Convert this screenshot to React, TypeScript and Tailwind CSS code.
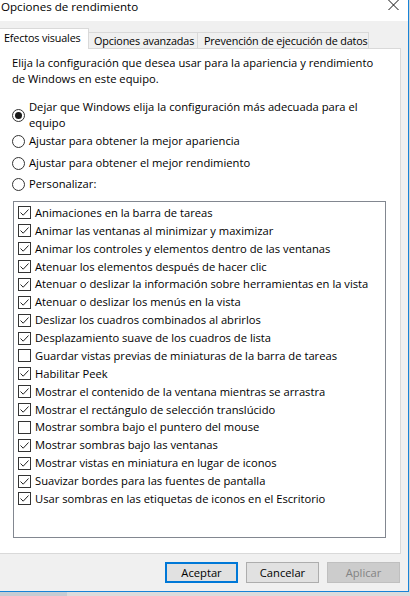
import { useState } from 'react';

const effects = [
  { label: 'Animaciones en la barra de tareas', on: true },
  { label: 'Animar las ventanas al minimizar y maximizar', on: true },
  { label: 'Animar los controles y elementos dentro de las ventanas', on: true },
  { label: 'Atenuar los elementos después de hacer clic', on: true },
  { label: 'Atenuar o deslizar la información sobre herramientas en la vista', on: true },
  { label: 'Atenuar o deslizar los menús en la vista', on: true },
  { label: 'Deslizar los cuadros combinados al abrirlos', on: true },
  { label: 'Desplazamiento suave de los cuadros de lista', on: true },
  { label: 'Guardar vistas previas de miniaturas de la barra de tareas', on: false },
  { label: 'Habilitar Peek', on: true },
  { label: 'Mostrar el contenido de la ventana mientras se arrastra', on: true },
  { label: 'Mostrar el rectángulo de selección translúcido', on: true },
  { label: 'Mostrar sombra bajo el puntero del mouse', on: false },
  { label: 'Mostrar sombras bajo las ventanas', on: true },
  { label: 'Mostrar vistas en miniatura en lugar de iconos', on: true },
  { label: 'Suavizar bordes para las fuentes de pantalla', on: true },
  { label: 'Usar sombras en las etiquetas de iconos en el Escritorio', on: true },
];

function Radio({ checked }: { checked: boolean }) {
  return (
    <span className="w-[13px] h-[13px] shrink-0 rounded-full border border-[#333] bg-white flex items-center justify-center">
      {checked && <span className="w-[7px] h-[7px] rounded-full bg-[#1a1a1a]" />}
    </span>
  );
}

function Check({ checked }: { checked: boolean }) {
  return (
    <span className="w-[13px] h-[13px] shrink-0 border border-[#333] bg-white flex items-center justify-center">
      {checked && (
        <svg width="11" height="11" viewBox="0 0 11 11">
          <path d="M1.5 5.5 L4.2 8.2 L9.5 2.5" fill="none" stroke="#222" strokeWidth="1" />
        </svg>
      )}
    </span>
  );
}

export default function App() {
  const [mode, setMode] = useState(0);
  const [items, setItems] = useState(effects);

  const radios = [
    <>
      Dejar que Windows elija la configuración más adecuada para el
      <br />
      equipo
    </>,
    'Ajustar para obtener la mejor apariencia',
    'Ajustar para obtener el mejor rendimiento',
    'Personalizar:',
  ];
  const radioMargins = ['mt-[12px]', 'mt-[2px]', 'mt-[6px]', 'mt-[5px]'];

  return (
    <div className="w-[410px] h-[596px] overflow-hidden bg-[#d4d4d4] text-[11.2px] text-black font-['Open_Sans',sans-serif]">
      <div className="w-[409px] h-[592px] bg-[#f0f0f0] border-r border-b border-[#1883d7] flex flex-col">
        {/* title bar */}
        <div className="h-[21px] bg-white relative">
          <span className="block pt-px leading-[12px] pl-px text-[11.6px]">Opciones de rendimiento</span>
          <svg className="absolute left-[388px] top-0" width="11" height="10" viewBox="0 0 11 10">
            <path d="M0.5 0 L10.5 10 M10.5 0 L0.5 10" stroke="#111" strokeWidth="1" />
          </svg>
        </div>

        {/* tabs */}
        <div className="h-[27px] flex items-end relative z-10 whitespace-nowrap text-[10.8px] tracking-[-0.15px]">
          <div className="shrink-0 h-[21px] w-[89px] bg-white border-t border-r border-[#d9d9d9] -mb-px pl-[4px] pt-[1px] leading-[16px]">
            Efectos visuales
          </div>
          <div className="shrink-0 h-[16px] w-[109px] border-t border-r border-[#d9d9d9] pl-[5px] leading-[15px] overflow-hidden">
            Opciones avanzadas
          </div>
          <div className="shrink-0 h-[16px] w-[171px] border-t border-r border-[#d9d9d9] pl-[6px] leading-[15px] overflow-hidden">
            Prevención de ejecución de datos
          </div>
        </div>

        {/* panel */}
        <div className="w-[401px] h-[506px] bg-white border-t border-r border-b border-[#d9d9d9] leading-[16px]">
          <p className="pt-[6px] pl-[12px]">
            Elija la configuración que desea usar para la apariencia y rendimiento
            <br />
            de Windows en este equipo.
          </p>

          {radios.map((r, i) => (
            <div
              key={i}
              onClick={() => setMode(i)}
              className={`${radioMargins[i]} pl-[12px] flex items-center gap-[4px]`}
            >
              <Radio checked={mode === i} />
              <span>{r}</span>
            </div>
          ))}

          <div className="mt-[9px] ml-[13px] w-[373px] h-[337px] border border-[#828790] pt-[2px]">
            {items.map((it, i) => (
              <div
                key={it.label}
                onClick={() =>
                  setItems(items.map((x, j) => (j === i ? { ...x, on: !x.on } : x)))
                }
                className="h-[17.875px] pl-[4px] flex items-center gap-[4px] whitespace-nowrap"
              >
                <Check checked={it.on} />
                <span>{it.label}</span>
              </div>
            ))}
          </div>
        </div>

        {/* buttons */}
        <div className="flex-1 flex justify-end gap-[8px] pr-[8px] pt-[8px]">
          <button className="w-[73px] h-[21px] bg-[#e1e1e1] border-2 border-[#0078d7] leading-none">
            Aceptar
          </button>
          <button className="w-[73px] h-[21px] bg-[#e1e1e1] border border-[#adadad] leading-none">
            Cancelar
          </button>
          <button className="w-[73px] h-[21px] bg-[#cccccc] border border-[#bfbfbf] text-[#838383] leading-none">
            Aplicar
          </button>
        </div>
      </div>
      <div className="flex h-[4px]">
        <div className="w-[67px] bg-[#c6ccd3]" />
        <div className="flex-1 bg-[#dcdcdc]" />
      </div>
    </div>
  );
}
